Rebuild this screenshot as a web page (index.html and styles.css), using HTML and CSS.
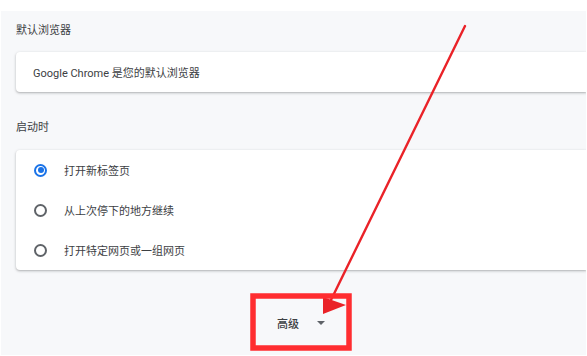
FILE: index.html
```html
<!DOCTYPE html>
<html>
  <head>
    <meta charset="utf-8">
    <link rel="stylesheet" href="styles.css">
  </head>
  <body>
  <main class="page">
    <h2 class="section-title">默认浏览器</h2>
    <section class="card">
      <div class="row">Google Chrome 是您的默认浏览器</div>
    </section>

    <h2 class="section-title startup">启动时</h2>
    <section class="card">
      <label class="row option">
        <span class="radio checked"></span>
        <span>打开新标签页</span>
      </label>
      <label class="row option">
        <span class="radio"></span>
        <span>从上次停下的地方继续</span>
      </label>
      <label class="row option">
        <span class="radio"></span>
        <span>打开特定网页或一组网页</span>
      </label>
    </section>

    <div class="advanced">
      <span class="advanced-label">高级</span>
      <span class="caret"></span>
    </div>
  </main>

  <!-- annotation drawn over the page -->
  <svg class="markup" width="587" height="356" viewBox="0 0 587 356">
    <line x1="465" y1="26" x2="330" y2="302" stroke="#ea2228" stroke-width="2.4" stroke-linecap="round"/>
    <polygon points="323,297 346,305 323,314" fill="#ea2228"/>
    <rect x="253" y="296" width="96" height="52" fill="none" stroke="#ff2d30" stroke-width="5.5"/>
  </svg>
  </body>
</html>
```

FILE: styles.css
```css
* {
  box-sizing: border-box;
}
body {
  margin: 0;
  background-color: #fff;
  font-family: Roboto, "Noto Sans CJK SC", sans-serif;
  font-size: 11px;
  color: #3c4043;
}
.page {
  margin: 11px 1px 0 1px;
  height: 344px;
  background-color: #f7f8fa;
  padding: 12px 0 0 15px;
  overflow: hidden;
}
.section-title {
  margin: 0;
  font-size: 11px;
  font-weight: normal;
  line-height: 16px;
  color: #3c4043;
}
.section-title.startup {
  margin-top: 28px;
}
.card {
  margin-top: 13px;
  background-color: #fff;
  border-radius: 4px 0 0 4px;
  box-shadow: 0 1px 2px rgba(60, 64, 67, 0.3), 0 1px 3px 1px rgba(60, 64, 67, 0.08);
}
.startup + .card {
  margin-top: 14px;
}
.row {
  display: flex;
  align-items: center;
  height: 40px;
  padding-left: 17px;
}
.option {
  padding-left: 18px;
  gap: 17px;
}
.radio {
  width: 13px;
  height: 13px;
  border: 2px solid #5f6368;
  border-radius: 50%;
  position: relative;
}
.radio.checked {
  border-color: #1a73e8;
}
.radio.checked::after {
  content: "";
  position: absolute;
  left: 1.5px;
  top: 1.5px;
  width: 6px;
  height: 6px;
  border-radius: 50%;
  background-color: #1a73e8;
}
.advanced {
  display: flex;
  align-items: center;
  margin-top: 44px;
  padding-left: 261px;
  height: 18px;
}
.advanced-label {
  font-weight: 500;
  color: #3c4043;
}
.caret {
  margin-left: 18px;
  width: 0;
  height: 0;
  border-left: 4px solid transparent;
  border-right: 4px solid transparent;
  border-top: 4px solid #5f6368;
}
.markup {
  position: absolute;
  left: 0;
  top: 0;
  pointer-events: none;
}
```
